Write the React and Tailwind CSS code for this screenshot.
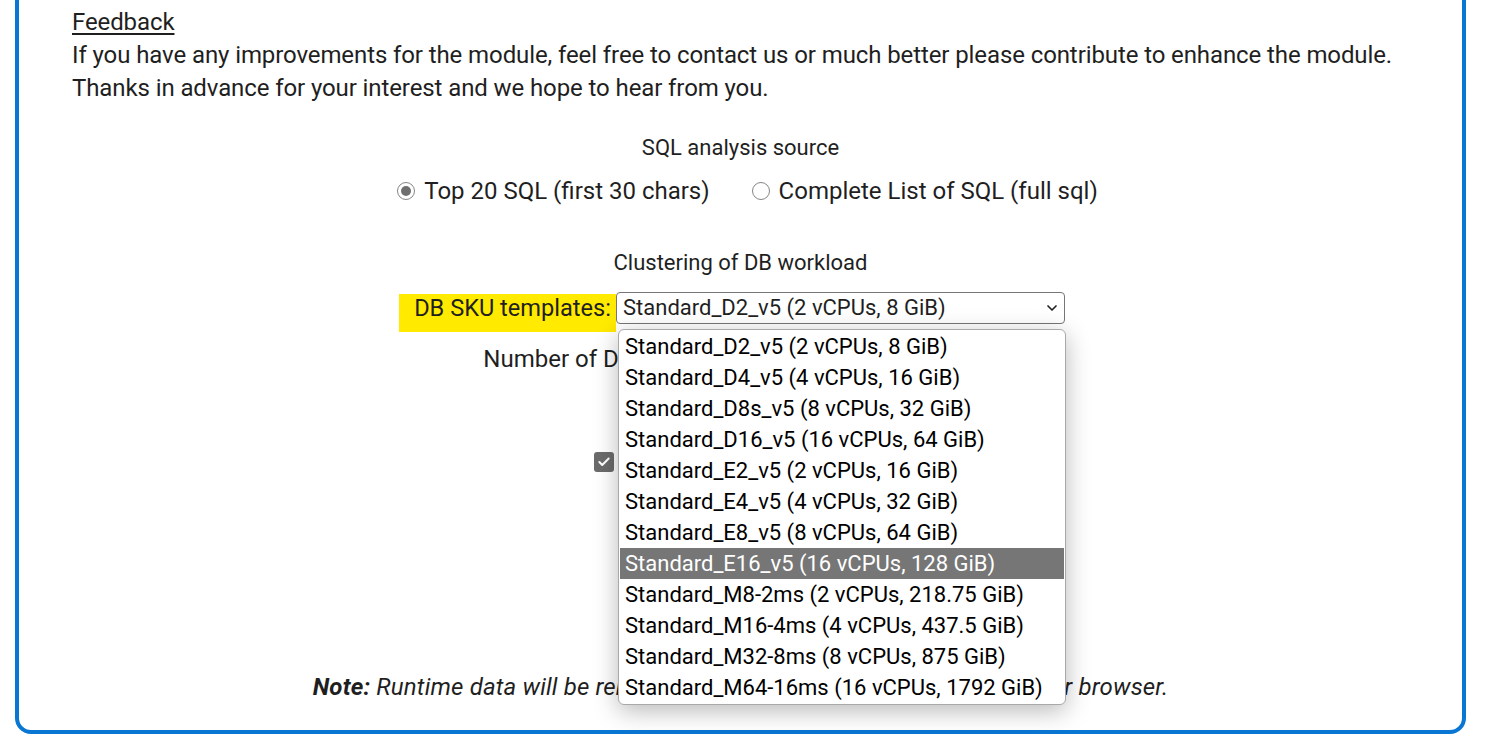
import { ChevronDown, Check } from 'lucide-react';

const SKUS = [
  'Standard_D2_v5 (2 vCPUs, 8 GiB)',
  'Standard_D4_v5 (4 vCPUs, 16 GiB)',
  'Standard_D8s_v5 (8 vCPUs, 32 GiB)',
  'Standard_D16_v5 (16 vCPUs, 64 GiB)',
  'Standard_E2_v5 (2 vCPUs, 16 GiB)',
  'Standard_E4_v5 (4 vCPUs, 32 GiB)',
  'Standard_E8_v5 (8 vCPUs, 64 GiB)',
  'Standard_E16_v5 (16 vCPUs, 128 GiB)',
  'Standard_M8-2ms (2 vCPUs, 218.75 GiB)',
  'Standard_M16-4ms (4 vCPUs, 437.5 GiB)',
  'Standard_M32-8ms (8 vCPUs, 875 GiB)',
  'Standard_M64-16ms (16 vCPUs, 1792 GiB)',
];

function Radio({ checked }) {
  return (
    <span className="inline-flex items-center justify-center w-[18px] h-[18px] rounded-full border border-[#858585] bg-white shrink-0">
      {checked && <span className="w-[10px] h-[10px] rounded-full bg-[#6f6f6f]" />}
    </span>
  );
}

export default function App() {
  return (
    <div className="relative h-[748px] overflow-hidden bg-white text-[#1f1f1f]" style={{ fontFamily: 'Roboto, "Noto Sans", sans-serif' }}>
      {/* Main panel, top scrolled out of view */}
      <div className="ml-[15px] -mt-[40px] h-[774px] w-[1451px] rounded-[16px] border-4 border-[#0a76d3]">
        <div className="pt-[42px] pl-[53px] text-[24px] leading-[33px] tracking-[-0.1px]">
          <p className="underline underline-offset-[3px]">Feedback</p>
          <p>If you have any improvements for the module, feel free to contact us or much better please contribute to enhance the module.</p>
          <p>Thanks in advance for your interest and we hope to hear from you.</p>
        </div>

        <div className="flex flex-col items-center text-[22px] leading-[30px]">
          <p className="mt-[28px]">SQL analysis source</p>
          <div className="mt-[13px] flex items-center gap-[42px] pl-[14px] text-[24px]">
            <label className="flex items-center gap-[9px]">
              <Radio checked />
              <span>Top 20 SQL (first 30 chars)</span>
            </label>
            <label className="flex items-center gap-[9px]">
              <Radio />
              <span>Complete List of SQL (full sql)</span>
            </label>
          </div>

          <p className="mt-[42px]">Clustering of DB workload</p>
          <div className="mt-[14px] flex items-start pr-[17px]">
            <span className="mt-[2px] h-[38px] w-[217px] bg-[#ffea00] pr-[5px] text-right text-[23.6px] leading-[28px]">DB SKU templates:</span>
            <div className="flex h-[32px] w-[449px] items-center justify-between rounded-[4px] border border-[#767676] pl-[6px] pr-[4px]">
              <span>{SKUS[0]}</span>
              <ChevronDown className="w-[16px] h-[16px]" strokeWidth={2.5} />
            </div>
          </div>

          <div className="mt-[12px] flex items-center gap-[8px] pr-[179px] text-[24px]">
            <span>Number of DB clusters:</span>
            <span className="h-[30px] w-[80px] rounded-[4px] border border-[#767676]" />
          </div>

          <div className="mt-[73px] flex items-center gap-[8px] pr-[43px] text-[24px]">
            <span className="flex h-[20px] w-[20px] items-center justify-center rounded-[3px] bg-[#6b6b6b]">
              <Check className="w-[14px] h-[14px] text-white" strokeWidth={3.5} />
            </span>
            <span>Include idle sessions</span>
          </div>
        </div>

        <p className="mt-[195px] text-center text-[24px] leading-[30px] italic tracking-[0.17px]">
          <b>Note:</b> Runtime data will be removed as soon as you close or refresh your browser.
        </p>
      </div>

      {/* Opened native select list */}
      <div className="absolute left-[618px] top-[329px] w-[448px] rounded-[6px] border border-[#a9a9a9] bg-white py-[1px] shadow-[0_6px_24px_rgba(0,0,0,0.28)]">
        {SKUS.map((s, i) => (
          <div
            key={s}
            className={`mx-[1px] h-[31px] pl-[5px] text-[22px] leading-[31px] ${i === 7 ? 'bg-[#767676] text-white' : 'text-black'}`}
          >
            {s}
          </div>
        ))}
      </div>
    </div>
  );
}
